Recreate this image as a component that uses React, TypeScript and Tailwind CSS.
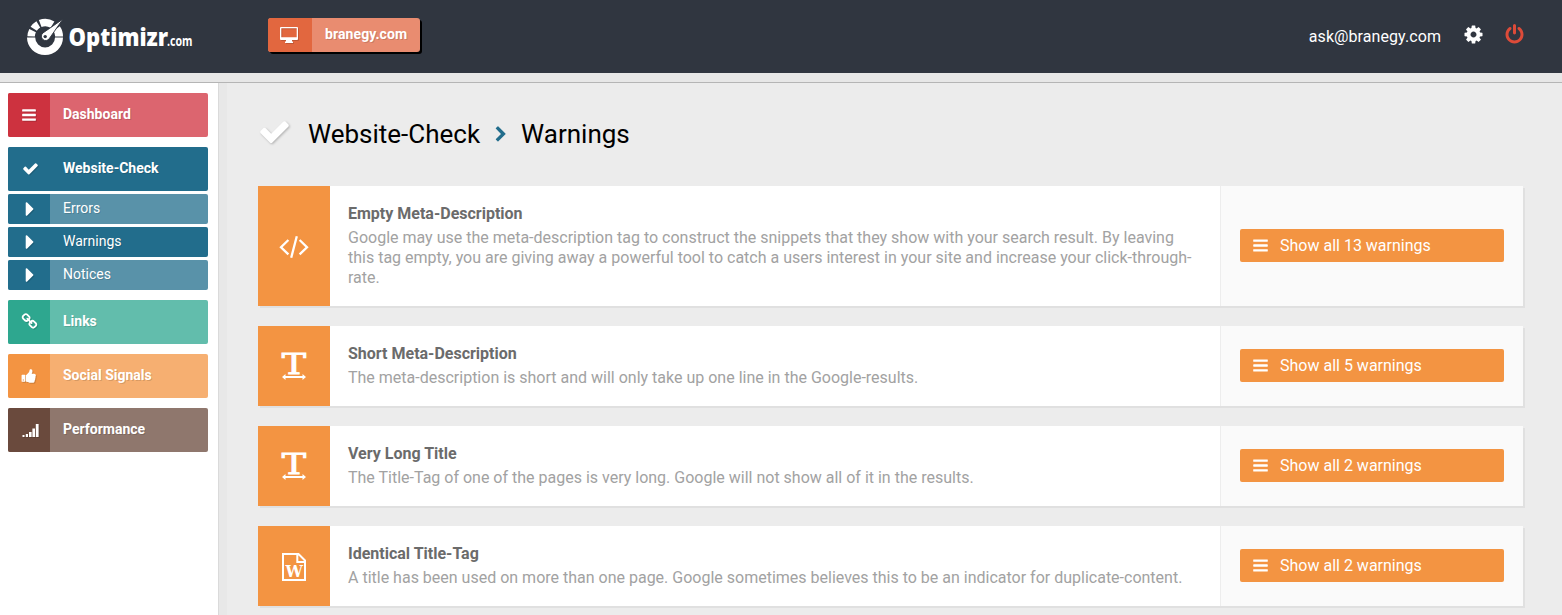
import React from "react";

const paths = {
  bars: "M1664 1344v128q0 26-19 45t-45 19h-1408q-26 0-45-19t-19-45v-128q0-26 19-45t45-19h1408q26 0 45 19t19 45zm0-512v128q0 26-19 45t-45 19h-1408q-26 0-45-19t-19-45v-128q0-26 19-45t45-19h1408q26 0 45 19t19 45zm0-512v128q0 26-19 45t-45 19h-1408q-26 0-45-19t-19-45v-128q0-26 19-45t45-19h1408q26 0 45 19t19 45z",
  check: "M1671 566q0 40-28 68l-724 724-136 136q-28 28-68 28t-68-28l-136-136-362-362q-28-28-28-68t28-68l136-136q28-28 68-28t68 28l294 295 656-657q28-28 68-28t68 28l136 136q28 28 28 68z",
  caret: "M1152 896q0 26-19 45l-448 448q-19 19-45 19t-45-19-19-45v-896q0-26 19-45t45-19 45 19l448 448q19 19 19 45z",
  cog: "M1152 896q0-106-75-181t-181-75-181 75-75 181 75 181 181 75 181-75 75-181zm512-109v222q0 12-8 23t-20 13l-185 28q-19 54-39 91 35 50 107 138 10 12 10 25t-9 23q-27 37-99 108t-94 71q-12 0-26-9l-138-108q-44 23-91 38-16 136-29 186-7 28-36 28h-222q-14 0-24.5-8.5t-11.5-21.5l-28-184q-49-16-90-37l-141 107q-10 9-25 9-14 0-25-11-126-114-165-168-7-10-7-23 0-12 8-23 15-21 51-66.5t54-70.5q-27-50-41-99l-183-27q-13-2-21-12.5t-8-23.5v-222q0-12 8-23t19-13l186-28q14-46 39-92-40-57-107-138-10-12-10-24 0-10 9-23 26-36 98.5-107.5t94.5-71.5q13 0 26 10l138 107q44-23 91-38 16-136 29-186 7-28 36-28h222q14 0 24.5 8.5t11.5 21.5l28 184q49 16 90 37l142-107q9-9 24-9 13 0 25 10 129 119 165 170 7 8 7 22 0 12-8 23-15 21-51 66.5t-54 70.5q26 50 41 98l183 28q13 2 21 12.5t8 23.5z",
  power: "M1664 896q0 156-61 298t-164 245-245 164-298 61-298-61-245-164-164-245-61-298q0-182 80.5-343t226.5-270q43-32 95.5-25t83.5 50q32 42 24.5 94.5t-49.5 84.5q-98 74-151.5 181t-53.5 228q0 104 40.5 198.5t109.5 163.5 163.5 109.5 198.5 40.5 198.5-40.5 163.5-109.5 109.5-163.5 40.5-198.5q0-121-53.5-228t-151.5-181q-42-32-49.5-84.5t24.5-94.5q31-43 84-50t95 25q146 109 226.5 270t80.5 343zm-640-768v640q0 52-38 90t-90 38-90-38-38-90v-640q0-52 38-90t90-38 90 38 38 90z",
  link: "M1520 1216q0-40-28-68l-208-208q-28-28-68-28-42 0-72 32 3 3 19 18.5t21.5 21.5 15 19 13 25.5 3.5 27.5q0 40-28 68t-68 28q-15 0-27.5-3.5t-25.5-13-19-15-21.5-21.5-18.5-19q-33 31-33 73 0 40 28 68l206 207q27 27 68 27 40 0 68-26l147-146q28-28 28-67zm-703-705q0-40-28-68l-206-207q-28-28-68-28-39 0-68 27l-147 146q-28 28-28 67 0 40 28 68l208 208q27 27 68 27 42 0 72-31-3-3-19-18.5t-21.5-21.5-15-19-13-25.5-3.5-27.5q0-40 28-68t68-28q15 0 27.5 3.5t25.5 13 19 15 21.5 21.5 18.5 19q33-31 33-73zm895 705q0 120-85 203l-147 146q-83 83-203 83-121 0-204-85l-206-207q-83-83-83-203 0-123 88-209l-88-88q-86 88-208 88-120 0-204-84l-208-208q-84-84-84-204t85-203l147-146q83-83 203-83 121 0 204 85l206 207q83 83 83 203 0 123-88 209l88 88q86-88 208-88 120 0 204 84l208 208q84 84 84 204z",
  thumb: "M320 1344q0-26-19-45t-45-19q-27 0-45.5 19t-18.5 45q0 27 18.5 45.5t45.5 18.5q26 0 45-18.5t19-45.5zm160-512v640q0 26-19 45t-45 19h-288q-26 0-45-19t-19-45v-640q0-26 19-45t45-19h288q26 0 45 19t19 45zm1184 0q0 86-55 149 15 44 15 76 3 76-43 137 17 56 0 117-15 57-54 94 9 112-49 181-64 76-197 78h-129q-66 0-144-15.5t-121.5-29-120.5-39.5q-123-43-158-44-26-1-45-19.5t-19-44.5v-641q0-25 18-43.5t43-20.5q24-2 76-59t101-121q68-87 101-120 18-18 31-48t17.5-48.5 13.5-60.5q7-39 12.5-61t19.5-52 34-50q19-19 45-19 46 0 82.5 10.5t60 26 40 40.5 24 45 12 50 5 45 .5 39q0 38-9.5 76t-19 60-27.5 56q-3 6-10 18t-11 22-8 24h277q78 0 135 57t57 135z",
  chevron: "M1363 877l-742 742q-19 19-45 19t-45-19l-166-166q-19-19-19-45t19-45l531-531-531-531q-19-19-19-45t19-45l166-166q19-19 45-19t45 19l742 742q19 19 19 45t-19 45z",
};

function Icon({ name, className }: { name: keyof typeof paths; className: string }) {
  return (
    <svg viewBox="0 0 1792 1792" fill="currentColor" className={`shrink-0 ${className}`}>
      <path d={paths[name]} />
    </svg>
  );
}

const iconShadow = "drop-shadow-[1px_1px_0_rgba(0,0,0,0.15)]";

function Signal() {
  return (
    <svg width="18" height="14" viewBox="0 0 18 14" fill="currentColor" className={`ml-[3px] mt-[2px] ${iconShadow}`}>
      <rect x="0.5" y="11" width="2" height="2" />
      <rect x="3.8" y="10" width="2.2" height="3" />
      <rect x="7" y="8" width="2.6" height="5" />
      <rect x="10.4" y="4.5" width="2.6" height="8.5" />
      <rect x="13.8" y="0" width="2.8" height="13" />
    </svg>
  );
}

function Logo() {
  return (
    <svg width="170" height="44" viewBox="0 0 170 44" className="ml-6 mt-[15px] shrink-0" fill="#fff">
      <path d="M3 22.6H11.2A9.9 9.9 0 0 0 31 22.6H39A18 17.4 0 0 1 3 22.6Z" />
      <path
        d="M7.1 21.3A14 14 0 0 1 8.6 15.6M9.7 13.8A14 14 0 0 1 14.3 9.4M16.2 8.5A14 14 0 0 1 28.5 9.6"
        fill="none"
        stroke="#fff"
        strokeWidth="7.4"
      />
      <path d="M35.8 11.2Q39 15.6 39 21.4H31.2Q31.1 18.2 29.4 16Z" />
      <path d="M38.8 4.2L25.3 23.6A4.3 4.3 0 1 1 19 17.9Z" stroke="#303640" strokeWidth="0.9" />
      <circle cx="21.2" cy="21.6" r="1.7" fill="#303640" />
      <text x="44.5" y="30.5" fontSize="25.5" fontWeight="800" fontFamily='"Open Sans", "Noto Sans", sans-serif' textLength="99.5" lengthAdjust="spacingAndGlyphs">
        Optimizr
      </text>
      <text x="143" y="30.5" fontSize="13.5" fontWeight="700" fontFamily='"Open Sans", "Noto Sans", sans-serif' textLength="25.5" lengthAdjust="spacingAndGlyphs">
        .com
      </text>
    </svg>
  );
}

function Header() {
  return (
    <header className="flex h-[73px] shrink-0 items-start bg-[#303640] text-white">
      <Logo />
      <div className="ml-[74px] mt-[18px] flex h-[34px] w-[152px] overflow-hidden rounded-[3px] bg-[#e98c70] shadow-[2px_2px_0_#000]">
        <div className="flex w-11 items-center justify-center bg-[#e2673f]">
          <svg width="18" height="16" viewBox="0 0 18 16" className={`-ml-[2px] ${iconShadow}`} fill="currentColor" fillRule="evenodd">
            <path d="M1 0H17Q18 0 18 1V12Q18 13 17 13H12V14.5H13V16H5V14.5H6V13H1Q0 13 0 12V1Q0 0 1 0ZM1.3 1.3V10.3H16.7V1.3Z" />
          </svg>
        </div>
        <span className="ml-[13px] text-[14px] font-bold leading-[33px] tracking-[0.1px] [text-shadow:1px_1px_0_rgba(0,0,0,0.15)]">branegy.com</span>
      </div>
      <div className="ml-auto mr-[37px] flex items-start">
        <span className="mt-[25px] text-[16px] leading-6 tracking-[0.08px]">ask@branegy.com</span>
        <Icon name="cog" className="ml-[22px] mt-[24px] h-[21px] w-[21px]" />
        <Icon name="power" className="ml-5 mt-[24px] h-[21px] w-[21px] text-[#dd4b39]" />
      </div>
    </header>
  );
}

type ItemProps = { label: string; icon: React.ReactNode; dark: string; light: string; sub?: boolean; className: string };

function NavItem({ label, icon, dark, light, sub, className }: ItemProps) {
  return (
    <div className={`flex w-[200px] shrink-0 overflow-hidden rounded-[2px] text-white ${sub ? "h-[30px]" : "h-11"} ${light} ${className}`}>
      <div className={`flex w-[42px] items-center justify-center ${dark}`}>{icon}</div>
      <span className={`ml-[13px] text-[14px] [text-shadow:1px_1px_0_rgba(0,0,0,0.15)] ${sub ? "leading-[29px]" : "font-bold leading-[43px]"}`}>
        {label}
      </span>
    </div>
  );
}

function Sidebar() {
  const small = `mb-px h-4 w-4 ${iconShadow}`;
  const caret = <Icon name="caret" className={`ml-[2px] h-6 w-6 ${iconShadow}`} />;
  return (
    <nav className="flex w-[219px] shrink-0 flex-col border-r border-[#dadada] bg-white pl-2 pt-[10px]">
      <NavItem label="Dashboard" icon={<Icon name="bars" className={small} />} dark="bg-[#cd323f]" light="bg-[#dc656f]" className="mb-[10px]" />
      <NavItem label="Website-Check" icon={<Icon name="check" className={`mb-[2px] ml-[2px] h-[17px] w-[17px] ${iconShadow}`} />} dark="bg-[#226d8c]" light="bg-[#226d8c]" className="mb-[3px]" />
      <NavItem sub label="Errors" icon={caret} dark="bg-[#226d8c]" light="bg-[#5992a9]" className="mb-[3px]" />
      <NavItem sub label="Warnings" icon={caret} dark="bg-[#226d8c]" light="bg-[#226d8c]" className="mb-[3px]" />
      <NavItem sub label="Notices" icon={caret} dark="bg-[#226d8c]" light="bg-[#5992a9]" className="mb-[10px]" />
      <NavItem label="Links" icon={<Icon name="link" className={`mb-[2px] ml-px h-[17px] w-[17px] ${iconShadow}`} />} dark="bg-[#2ea78f]" light="bg-[#62bdac]" className="mb-[10px]" />
      <NavItem label="Social Signals" icon={<Icon name="thumb" className={`h-4 w-4 ${iconShadow}`} />} dark="bg-[#f39442]" light="bg-[#f6af71]" className="mb-[10px]" />
      <NavItem label="Performance" icon={<Signal />} dark="bg-[#6a4a3d]" light="bg-[#8f776d]" className="" />
    </nav>
  );
}

function CodeIcon() {
  return (
    <svg width="30" height="24" viewBox="0 0 30 24" fill="none" stroke="currentColor" strokeWidth="2.3">
      <path d="M9.4 5L2 12.2L9.4 19.4M20.6 5L28 12.2L20.6 19.4M17.8 1.3L12.2 22.7" />
    </svg>
  );
}

function TextWidthIcon() {
  return (
    <svg width="26" height="28" viewBox="0 0 26 28" fill="currentColor" className="overflow-visible">
      <text x="0.8" y="20.8" fontSize="27" fontFamily='"DejaVu Serif", serif' textLength="24.4" lengthAdjust="spacingAndGlyphs" stroke="currentColor" strokeWidth="0.8">
        T
      </text>
      <path d="M1 24L4.5 21V23H21.5V21L25 24L21.5 27V25H4.5V27Z" />
    </svg>
  );
}

function WordIcon() {
  return (
    <svg width="24" height="28" viewBox="0 0 24 28" fill="none" stroke="currentColor" strokeWidth="2">
      <path d="M1 1H16.5L23 7.5V27H1ZM15.3 1V9H23" />
      <text x="3.4" y="23.6" fontSize="16.5" fontWeight="700" fontFamily='"DejaVu Serif", serif' textLength="17.4" lengthAdjust="spacingAndGlyphs" fill="currentColor" stroke="none">
        W
      </text>
    </svg>
  );
}

const warnings = [
  {
    title: "Empty Meta-Description",
    text: "Google may use the meta-description tag to construct the snippets that they show with your search result. By leaving this tag empty, you are giving away a powerful tool to catch a users interest in your site and increase your click-through-rate.",
    count: 13,
    icon: <CodeIcon />,
  },
  { title: "Short Meta-Description", text: "The meta-description is short and will only take up one line in the Google-results.", count: 5, icon: <TextWidthIcon /> },
  { title: "Very Long Title", text: "The Title-Tag of one of the pages is very long. Google will not show all of it in the results.", count: 2, icon: <TextWidthIcon /> },
  {
    title: "Identical Title-Tag",
    text: "A title has been used on more than one page. Google sometimes believes this to be an indicator for duplicate-content.",
    count: 2,
    icon: <WordIcon />,
  },
];

export default function App() {
  return (
    <div className="flex h-[615px] w-[1562px] flex-col overflow-hidden bg-[#ececec] font-[Roboto,sans-serif] text-[16px]">
      <Header />
      <div className="h-[10px] shrink-0 border-b border-[#b5b5b5] bg-[#e7e7e7]" />
      <div className="flex min-h-0 flex-1">
        <Sidebar />
        <div className="w-2 shrink-0 bg-[#e8e8e8]" />
        <main className="ml-[31px] w-[1265px] shrink-0">
          <h1 className="mb-8 mt-[31px] flex h-10 items-center text-[26px] text-black">
            <Icon name="check" className="mb-[5px] h-[33px] w-[33px] text-white drop-shadow-[1px_1px_1px_rgba(0,0,0,0.25)]" />
            <span className="ml-[17px]">Website-Check</span>
            <Icon name="chevron" className="ml-[12px] mr-[11px] h-[17px] w-[18px] text-[#226d8c]" />
            <span>Warnings</span>
          </h1>
          <div className="flex flex-col gap-5">
            {warnings.map((w) => (
              <section key={w.title} className="flex shrink-0 bg-white shadow-[2px_2px_0_#e0e0e0]">
                <div className="flex w-[72px] shrink-0 items-center justify-center bg-[#f39442] pt-[2px] text-white">{w.icon}</div>
                <div className="w-[890px] pb-[18px] pl-[18px] pr-6 pt-[18px]">
                  <h2 className="mb-1 text-[16px] font-bold leading-5 text-[#6b6b6b]">{w.title}</h2>
                  <p className="text-[16px] leading-5 text-[#a2a2a2]">{w.text}</p>
                </div>
                <div className="flex flex-1 items-center border-l border-[#ededed] bg-[#fafafa] pb-px pl-[19px]">
                  <button className="flex h-[33px] w-[264px] items-center rounded-[2px] bg-[#f39442] pl-3 text-white">
                    <Icon name="bars" className="h-[17px] w-[17px]" />
                    <span className="ml-[11px] leading-[33px]">Show all {w.count} warnings</span>
                  </button>
                </div>
              </section>
            ))}
          </div>
        </main>
      </div>
    </div>
  );
}
